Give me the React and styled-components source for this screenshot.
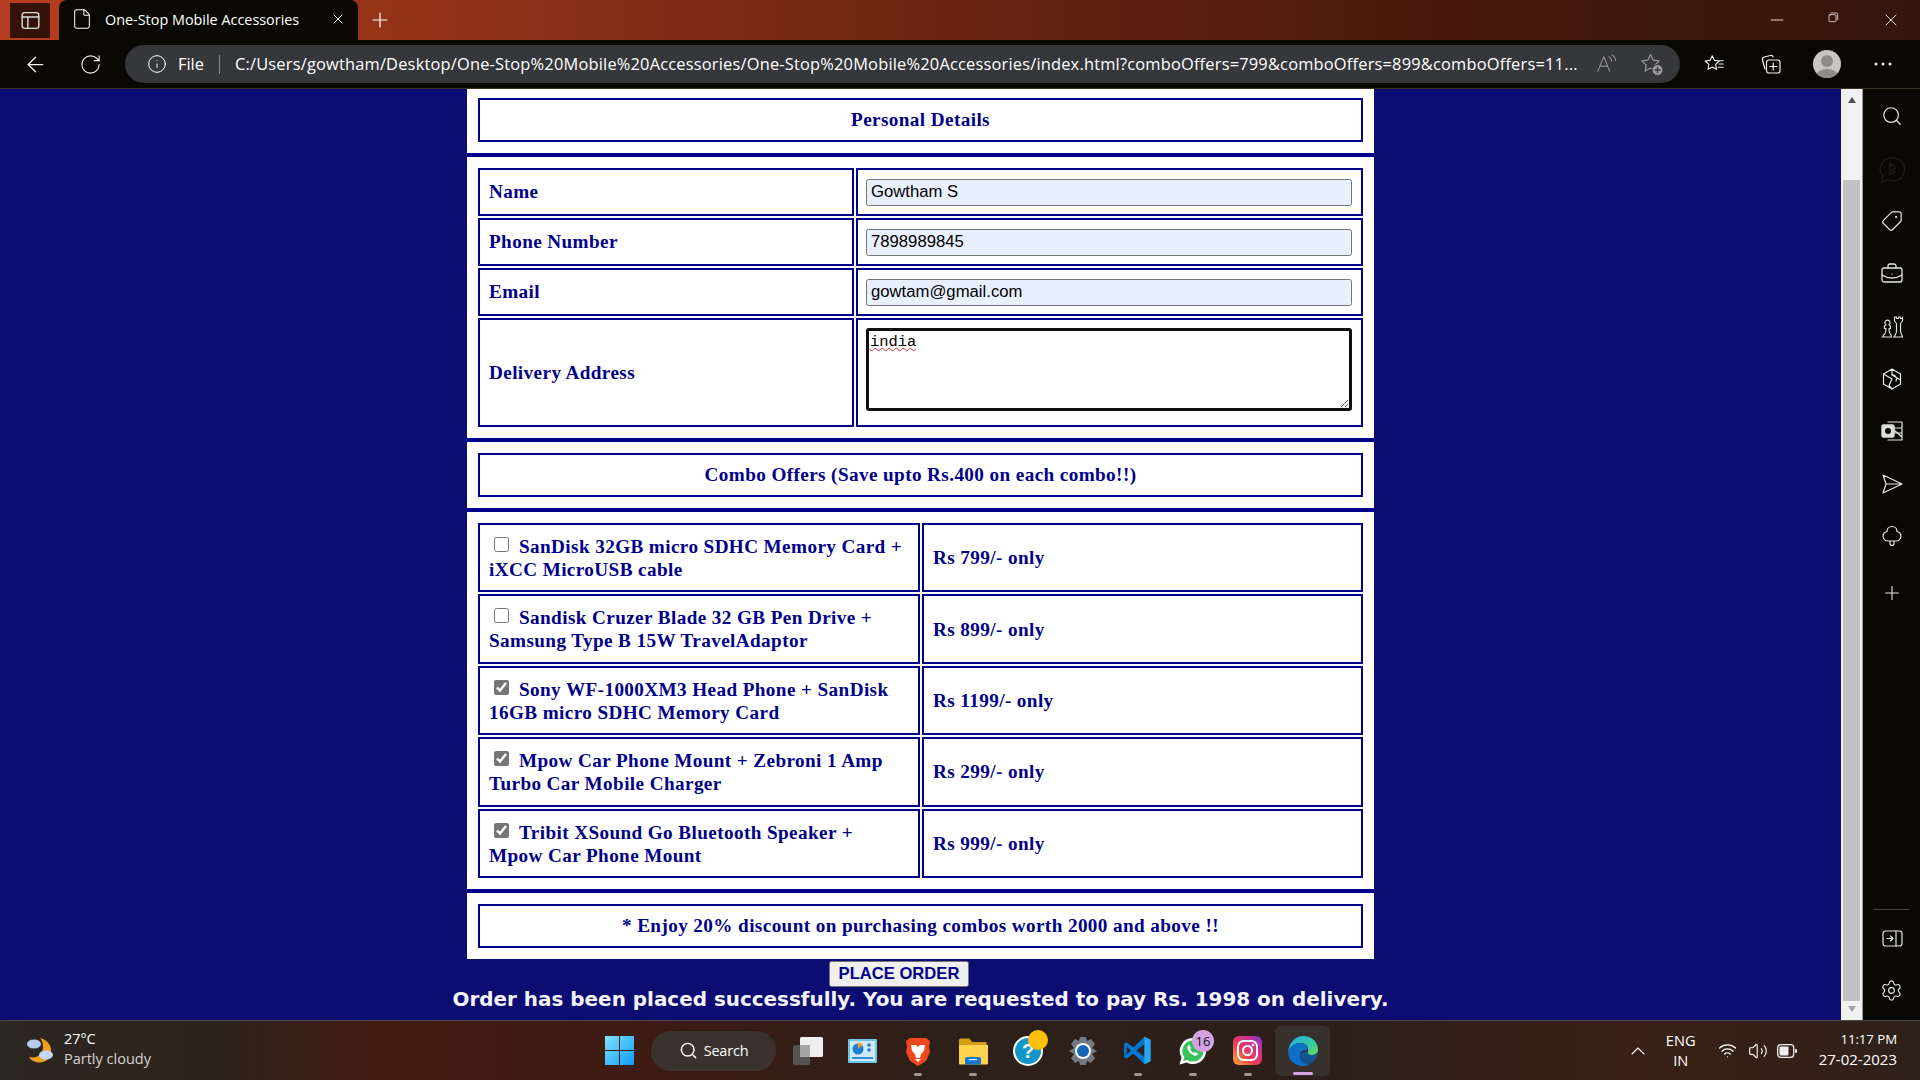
import React from 'react';
import styled, { createGlobalStyle } from 'styled-components';
import { ArrowLeft, RotateCw, Info, File, X, Plus, Minus, Search, Tag, BriefcaseBusiness, Settings, Wifi, Volume2, ChevronUp } from 'lucide-react';

const Global = createGlobalStyle`
  html, body { margin: 0; height: 100%; overflow: hidden; background: #0c0c72; }
  #root { height: 100%; }
  * { box-sizing: border-box; }
`;
const ui = `"Open Sans", "Noto Sans", sans-serif`;
const serif = `"Liberation Serif", "Times New Roman", serif`;
const arial = `"Liberation Sans", Arial, sans-serif`;
const ink = '#00008b';

const Shell = styled.div`display:flex;flex-direction:column;width:1920px;height:1080px;overflow:hidden;`;

const TitleBar = styled.div`
  height:40px;flex:none;display:flex;align-items:stretch;
  background:linear-gradient(90deg,#b83d22 0%,#9a3519 15%,#8f3119 25%,#6a2412 50%,#47190c 75%,#33160a 100%);
`;
const SideToggle = styled.div`width:40px;height:35px;margin:3px 0 0 10px;background:#33130a;display:flex;align-items:center;justify-content:center;`;
const Tab = styled.div`
  width:299px;margin-left:9px;background:#0a0803;border-radius:8px 8px 0 0;display:flex;align-items:center;
  padding:0 12px 2px 12px;color:#fff;font:14.4px ${ui};gap:12px;
  span{flex:1;white-space:nowrap;}
`;
const NewTab = styled.div`width:44px;display:flex;align-items:center;justify-content:center;color:#fff;`;
const Controls = styled.div`margin-left:auto;display:flex;color:#fff;`;
const Control = styled.div`width:${p => p.$w}px;display:flex;align-items:center;justify-content:center;`;
const LastGap = styled.div`width:1px;`;

const Toolbar = styled.div`height:49px;flex:none;background:#0a0803;border-bottom:1px solid #3a3324;display:flex;align-items:center;padding:0 9px 0 8px;color:#f2f2f2;`;
const NavButton = styled.div`width:55px;display:flex;justify-content:center;align-items:center;`;
const Address = styled.div`
  width:1555px;height:38px;margin-left:7px;margin-right:7px;background:#36373b;border-radius:19px;display:flex;align-items:center;
  padding:0 16px 0 22px;color:#fff;font:16.4px ${ui};white-space:nowrap;
`;
const InfoSlot = styled.div`display:flex;align-items:center;margin-right:11px;`;
const FileLabel = styled.span`padding-bottom:2px;`;
const Sep = styled.div`width:1px;height:19px;background:#8a8a8a;margin:0 15px 0 15px;`;
const Url = styled.div`width:1346px;overflow:hidden;letter-spacing:.2px;flex:none;padding-bottom:2px;`;
const AddrIcons = styled.div`display:flex;margin-left:auto;color:#9b9b9b;gap:22px;align-items:center;`;
const ToolButton = styled.div`width:56px;display:flex;justify-content:center;align-items:center;`;
const Avatar = styled.div`width:28px;height:28px;border-radius:50%;overflow:hidden;background:#c9c6c2;`;

const Middle = styled.div`flex:1;display:flex;min-height:0;`;
const Page = styled.main`flex:1;background:#0c0c72;display:flex;flex-direction:column;align-items:center;min-width:0;`;
const Card = styled.div`width:907px;background:#fff;font:bold 19.2px/23px ${serif};color:${ink};letter-spacing:.39px;`;
const Section = styled.section`
  padding:${p => p.$first ? '9px 11px 11px' : '11px'};
  border-top:${p => p.$first ? '0' : `4px solid ${ink}`};
`;
const Banner = styled.div`height:44px;border:2px solid ${ink};display:flex;align-items:center;justify-content:center;padding-bottom:${p => p.$flat ? '0' : '2px'};`;
const Form = styled.div`display:grid;grid-template-columns:376px 507px;gap:2px;grid-template-rows:48px 48px 48px 109px;`;
const Combos = styled.div`display:grid;grid-template-columns:442px 441px;gap:2px;grid-auto-rows:69.4px;`;
const Cell = styled.div`border:2px solid ${ink};padding:0 9px ${p => p.$lift ? '2px' : '0'};display:flex;align-items:center;min-width:0;`;
const ComboCell = styled.label`border:2px solid ${ink};padding:0 9px;display:block;align-self:stretch;`;
const ComboText = styled.span`display:block;margin-top:10px;`;
const InputCell = styled(Cell)`padding:0 9px 0 8px;`;
const AreaCell = styled(Cell)`padding:8px 9px 0 8px;align-items:flex-start;`;
const TextInput = styled.input`
  width:100%;height:27px;background:#e8f0fe;border:1px solid #767676;border-radius:2.5px;padding:0 4px;
  font:16.7px ${arial};color:#000;outline:0;
`;
const TextArea = styled.textarea`
  width:100%;height:83px;border:3px solid #101010;border-radius:3px;padding:2px 1px 0;outline:0;
  font:15.4px/1.2 "Liberation Mono",monospace;color:#000;display:block;
  text-decoration:underline wavy #e03030 1px;
`;
const Check = styled.input`width:15px;height:15px;margin:0 10px 0 5px;accent-color:#767676;vertical-align:1px;`;
const PlaceOrder = styled.button`
  width:140px;height:26px;margin:2px 43px 0 0;background:#efefef;border:1px solid #767676;border-radius:2.5px;padding:0;
  font:bold 16.6px ${arial};color:${ink};
`;
const Status = styled.div`font:bold 19.95px/1.2 "DejaVu Sans",Verdana,sans-serif;color:#f4f4ff;margin-top:1px;white-space:nowrap;`;

const Scrollbar = styled.div`width:22px;flex:none;background:#f1f1f1;display:flex;flex-direction:column;align-items:center;padding:8px 0 8px;border-right:1px solid #999;`;
const Arrow = styled.div`width:0;height:0;border-left:4.5px solid transparent;border-right:4.5px solid transparent;${p => p.$down ? 'border-top:6px solid #a3a3a3;' : 'border-bottom:6px solid #505050;'}`;
const Thumb = styled.div`width:17px;flex:1;background:#c1c1c1;margin:77px 0 5px;`;

const Side = styled.aside`width:57px;flex:none;background:#0a0803;color:#e6e6e6;display:flex;flex-direction:column;align-items:center;padding-top:16px;`;
const SideIcon = styled.div`height:52.4px;width:100%;display:flex;align-items:flex-start;justify-content:center;flex:none;${p => p.$gapTop && 'margin-top:5px;'}`;
const SideFoot = styled.div`margin-top:auto;width:100%;display:flex;flex-direction:column;align-items:center;padding-bottom:18px;`;
const SideRule = styled.div`width:35px;height:1px;background:#4a4640;margin-bottom:17px;`;

const Taskbar = styled.footer`
  height:60px;flex:none;border-top:1px solid #4a4744;display:flex;align-items:center;color:#fff;font:13px ${ui};position:relative;
  background:linear-gradient(90deg,#2b2721 0%,#2e231c 12%,#451c12 20%,#401a12 30%,#2d201a 50%,#2c1f1a 70%,#3a2016 85%,#2e211a 100%);
`;
const Weather = styled.div`width:592px;flex:none;display:flex;align-items:center;padding-left:26px;gap:8px;`;
const WeatherText = styled.div`line-height:20px;font-size:14.4px;padding-bottom:3px;color:#fff;small{display:block;font-size:14.5px;color:#d5d2cf;}`;
const Slot = styled.div`
  width:55px;height:50px;flex:none;display:flex;align-items:center;justify-content:center;position:relative;border-radius:6px;
  ${p => p.$active && 'background:#38302b;'}
  ${p => p.$dot && `&::after{content:'';position:absolute;left:50%;bottom:${p.$active ? '1px' : '0'};transform:translateX(-50%);width:${p.$active ? '20px' : '8px'};height:3px;border-radius:2px;background:${p.$active ? '#d7a3e6' : '#9a9693'};}`}
`;
const SearchPill = styled.div`width:125px;height:40px;margin:0 4px;border-radius:20px;background:#3a322d;display:flex;align-items:center;justify-content:center;gap:6px;font-size:14.5px;letter-spacing:-.2px;flex:none;`;
const Badge = styled.div`position:absolute;top:4px;right:${p => p.$right}px;width:${p => p.$size}px;height:${p => p.$size}px;border-radius:50%;display:flex;align-items:center;justify-content:center;font-size:13px;color:#111;background:${p => p.$color};`;
const Tray = styled.div`margin-left:auto;display:flex;align-items:center;padding-right:23px;`;
const TrayIcon = styled.div`display:flex;align-items:center;justify-content:center;width:${p => p.$w || 29}px;`;
const Lang = styled.div`width:56px;text-align:center;line-height:20px;font-size:14.6px;margin-right:2px;padding-bottom:2px;`;
const Clock = styled.div`text-align:right;line-height:20px;margin-left:16px;padding-bottom:3px;`;
const ClockTime = styled.div`font-size:13.3px;letter-spacing:-.1px;`;
const ClockDate = styled.div`font-size:15px;`;

const Offers = [
  ['SanDisk 32GB micro SDHC Memory Card + iXCC MicroUSB cable', 'Rs 799/- only', false],
  ['Sandisk Cruzer Blade 32 GB Pen Drive + Samsung Type B 15W TravelAdaptor', 'Rs 899/- only', false],
  ['Sony WF-1000XM3 Head Phone + SanDisk 16GB micro SDHC Memory Card', 'Rs 1199/- only', true],
  ['Mpow Car Phone Mount + Zebroni 1 Amp Turbo Car Mobile Charger', 'Rs 299/- only', true],
  ['Tribit XSound Go Bluetooth Speaker + Mpow Car Phone Mount', 'Rs 999/- only', true],
];

const Svg = ({ s = 24, v = '0 0 24 24', children }) => <svg width={s} height={s} viewBox={v} fill="none" stroke="currentColor" strokeWidth="1.4" strokeLinecap="round" strokeLinejoin="round">{children}</svg>;

const App = () => (
  <Shell>
    <Global />
    <TitleBar>
      <SideToggle><Svg s={21}><rect x="2.500" y="3" width="19" height="18" rx="3" stroke="#ddd" strokeWidth="1.600" /><path d="M2.500 8h19M9 8v13" stroke="#ddd" strokeWidth="1.600" /></Svg></SideToggle>
      <Tab><File size={22} strokeWidth={1.1} /><span>One-Stop Mobile Accessories</span><X size={16} strokeWidth={1.5} /></Tab>
      <NewTab><Plus size={24} strokeWidth={1.2} /></NewTab>
      <Controls>
        <Control $w={62}><Minus size={20} strokeWidth={1} /></Control>
        <Control $w={55}><Svg s={16}><rect x="1.500" y="4" width="10.500" height="10.500" rx="1.800" strokeWidth="1.100" /><path d="M4.500 1.500h8a2 2 0 0 1 2 2v8" strokeWidth="1.100" /></Svg></Control>
        <Control $w={56}><X size={20} strokeWidth={1} /></Control>
        <LastGap />
      </Controls>
    </TitleBar>
    <Toolbar>
      <NavButton><ArrowLeft size={25} strokeWidth={1.2} /></NavButton>
      <NavButton><RotateCw size={23} strokeWidth={1.2} /></NavButton>
      <Address>
        <InfoSlot><Info size={20} strokeWidth={1.2} /></InfoSlot>
        <FileLabel>File</FileLabel><Sep />
        <Url>C:/Users/gowtham/Desktop/One-Stop%20Mobile%20Accessories/One-Stop%20Mobile%20Accessories/index.html?comboOffers=799&amp;comboOffers=899&amp;comboOffers=11...</Url>
        <AddrIcons>
          <Svg s={22}><path d="M2 20 8.500 4 15 20M4.500 14.500h8M14 4c2 1 3 3 3.200 5M17.500 2c2.400 1.400 3.700 3.800 4 6.500" strokeWidth="1.100" /></Svg>
          <Svg s={24}><path d="m10.500 2.500 2.600 5.600 6.100.8-4.500 4.200 1.200 6-5.400-3-5.400 3 1.200-6-4.500-4.200 6.100-.8z" strokeWidth="1.200" /><circle cx="17.500" cy="18" r="5.500" fill="#9b9b9b" stroke="#36373b" strokeWidth="1" /><path d="M17.500 15.500v5M15 18h5" stroke="#36373b" strokeWidth="1.300" /></Svg>
        </AddrIcons>
      </Address>
      <ToolButton><Svg s={22}><path d="m9 3 2.300 5 5.400.7-4 3.700 1 5.400L9 15.200l-4.700 2.600 1-5.400-4-3.700 5.400-.7zM16 8.500h5M16.500 12h4.500M15.500 15.500h5.500" strokeWidth="1.200" /></Svg></ToolButton>
      <ToolButton><Svg s={24}><path d="M6 17 3.500 8A2.500 2.500 0 0 1 5.300 5l6-1.500c1.300-.3 2.300.2 2.800 1.500" strokeWidth="1.200" /><rect x="7.500" y="8" width="13.500" height="13" rx="2.500" strokeWidth="1.200" /><path d="M14.200 11v7M10.800 14.500h7" strokeWidth="1.200" /></Svg></ToolButton>
      <ToolButton><Avatar><svg width="28" height="28" viewBox="0 0 28 28"><circle cx="14" cy="11" r="6" fill="#8f8c88" /><ellipse cx="14" cy="26" rx="11" ry="7" fill="#8f8c88" /></svg></Avatar></ToolButton>
      <ToolButton><svg width="20" height="6" viewBox="0 0 20 6"><circle cx="3" cy="3" r="1.500" fill="#eee" /><circle cx="10" cy="3" r="1.500" fill="#eee" /><circle cx="17" cy="3" r="1.500" fill="#eee" /></svg></ToolButton>
    </Toolbar>
    <Middle>
      <Page>
        <Card>
          <Section $first><Banner>Personal Details</Banner></Section>
          <Section>
            <Form>
              <Cell $lift>Name</Cell><InputCell><TextInput readOnly value="Gowtham S" /></InputCell>
              <Cell $lift>Phone Number</Cell><InputCell><TextInput readOnly value="7898989845" /></InputCell>
              <Cell $lift>Email</Cell><InputCell><TextInput readOnly value="gowtam@gmail.com" /></InputCell>
              <Cell>Delivery Address</Cell><AreaCell><TextArea readOnly value="india" /></AreaCell>
            </Form>
          </Section>
          <Section><Banner>Combo Offers (Save upto Rs.400 on each combo!!)</Banner></Section>
          <Section>
            <Combos>
              {Offers.map(([name, price, on]) => (
                <React.Fragment key={name}>
                  <ComboCell><ComboText><Check type="checkbox" readOnly checked={on} />{name}</ComboText></ComboCell>
                  <Cell>{price}</Cell>
                </React.Fragment>
              ))}
            </Combos>
          </Section>
          <Section><Banner $flat>* Enjoy 20% discount on purchasing combos worth 2000 and above !!</Banner></Section>
        </Card>
        <PlaceOrder>PLACE ORDER</PlaceOrder>
        <Status>Order has been placed successfully. You are requested to pay Rs. 1998 on delivery.</Status>
      </Page>
      <Scrollbar><Arrow /><Thumb /><Arrow $down /></Scrollbar>
      <Side>
        <SideIcon><Search size={22} strokeWidth={1.3} /></SideIcon>
        <SideIcon><Svg s={26}><path d="M13 1a10.500 10.500 0 1 1-5 19.700L3 24l.5-6A10.500 10.500 0 0 1 13 1z" stroke="#1c1b18" /><path d="M10 6v10l5-2.500-3-1.500 4-2z" stroke="#1c1b18" /></Svg></SideIcon>
        <SideIcon><Tag size={22} strokeWidth={1.3} style={{ transform: 'rotate(90deg)' }} /></SideIcon>
        <SideIcon><BriefcaseBusiness size={24} strokeWidth={1.3} /></SideIcon>
        <SideIcon><Svg s={24}><path d="M2 22h9M3 22c0-2 1-2.500 2-3.500s1-3 1-5H4.500c-.5-2 .3-3.200 1.500-3.700a2.600 2.600 0 1 1 3 0c1.200.5 1.700 1.800 1.500 3.700H9c0 2 .2 4 1 5s1.500 1.500 1.500 3.500" strokeWidth="1.150" /><path d="M13.500 22h9M14.500 22c0-2 1.500-2.500 1.800-4.500.3-2 .2-6 .2-9L14.500 6V2h2v1.500h2V2h2v1.500h2V2v4l-2 2.500c0 3 0 7 .3 9 .3 2 1.700 2.500 1.700 4.500" strokeWidth="1.150" /></Svg></SideIcon>
        <SideIcon><Svg s={24}><path d="m12 2 8.500 5v10L12 22l-8.500-5V7zM3.500 7 12 12l-3 6.500M12 2v6l8.500 5M9 18.500l3 3.500M12 8a4 4 0 0 1 4 6" strokeWidth="1.200" /></Svg></SideIcon>
        <SideIcon><Svg s={24}><rect x="2" y="6" width="12" height="12" rx="1.500" fill="#ddd" stroke="#ddd" /><circle cx="8" cy="12" r="3" fill="#0a0803" stroke="none" /><path d="M8 3h14v18H8M14 9h8M14 14h8M14 11l8 7" strokeWidth="1.200" /></Svg></SideIcon>
        <SideIcon><Svg s={24}><path d="M3 3 22 12 3 21l3-9zM6 12h16" strokeWidth="1.200" /></Svg></SideIcon>
        <SideIcon><Svg s={24}><path d="M12 2.500c3 0 5 2.200 5 5 2.500.6 4 2.400 4 4.700a4.800 4.800 0 0 1-5 4.800H8a4.800 4.800 0 0 1-5-4.800c0-2.300 1.500-4.100 4-4.700 0-2.800 2-5 5-5zM10 17v2.500a2 2 0 0 0 4 0V17" strokeWidth="1.200" /></Svg></SideIcon>
        <SideIcon $gapTop><Plus size={22} strokeWidth={1.2} /></SideIcon>
        <SideFoot>
          <SideRule />
          <SideIcon><Svg s={24}><rect x="3" y="4" width="19" height="15" rx="2.500" strokeWidth="1.200" /><path d="M16 4v15M7 11.500h5.500M10.500 9l2.500 2.500-2.500 2.500" strokeWidth="1.200" /></Svg></SideIcon>
          <Settings size={23} strokeWidth={1.2} />
        </SideFoot>
      </Side>
    </Middle>
    <Taskbar>
      <Weather>
        <svg width="30" height="30" viewBox="0 0 30 30"><path d="M14 2c8 2 12 8 11 15s-8 11-15 9c-4-1-6-3-7-5 8 2 14-3 14-10 0-4-1-7-3-9z" fill="#f0a020" /><ellipse cx="8" cy="8" rx="7" ry="4.500" fill="#b6cdf2" /><ellipse cx="20" cy="19" rx="7" ry="4.500" fill="#c3d7f6" /></svg>
        <WeatherText>27°C<small>Partly cloudy</small></WeatherText>
      </Weather>
      <Slot><svg width="29" height="29" viewBox="0 0 29 29"><defs><linearGradient id="w" x1="0" y1="0" x2="1" y2="1"><stop offset="0" stopColor="#7fe3ff" /><stop offset="1" stopColor="#0f9bf5" /></linearGradient></defs><path d="M0 0h14v14H0zM15 0h14v14H15zM0 15h14v14H0zM15 15h14v14H15z" fill="url(#w)" /></svg></Slot>
      <SearchPill><Search size={19} strokeWidth={1.8} />Search</SearchPill>
      <Slot><svg width="30" height="28" viewBox="0 0 30 28"><rect x="0" y="8" width="17" height="20" rx="2" fill="#55534f" /><rect x="7" y="0" width="23" height="20" rx="1.500" fill="#efefef" /><rect x="7" y="8" width="10" height="12" fill="#a8a6a4" /></svg></Slot>
      <Slot><svg width="29" height="24" viewBox="0 0 29 24"><rect width="29" height="24" rx="1" fill="#6ec6ec" /><rect x="2" y="2" width="25" height="20" fill="#cfe9f7" /><circle cx="10" cy="10" r="5.500" fill="#1e7fd0" /><path d="M10 10V3l5 2z" fill="#f0a030" /><circle cx="21" cy="6" r="1.800" fill="#1e7fd0" /><circle cx="21" cy="11" r="1.800" fill="#1e7fd0" /><rect x="4" y="18" width="21" height="2" fill="#2a8ed8" /></svg></Slot>
      <Slot $dot><svg width="26" height="30" viewBox="0 0 26 30"><path d="M5 2h16l4 3-1 6 1 5-4 9-8 5-8-5-4-9 1-5-1-6z" fill="#f0481e" /><path d="M6 9h5l2 2 2-2h5l-1 6-3 3-1 4h-4l-1-4-3-3zM10 23h6l-3 3z" fill="#fff" /></svg></Slot>
      <Slot $dot><svg width="30" height="28" viewBox="0 0 30 28"><path d="M1 3a1.500 1.500 0 0 1 1.500-1.500h9L14 5h14.500v4H1z" fill="#d69c12" /><path d="M1 8h29v18.500a1 1 0 0 1-1 1H2a1 1 0 0 1-1-1z" fill="#ffd34e" /><path d="M7 22a2 2 0 0 1 2-2h12a2 2 0 0 1 2 2v5.500H7z" fill="#1477c9" /><rect x="11" y="22" width="8" height="1.200" fill="#cfe8fa" /></svg></Slot>
      <Slot><svg width="30" height="30" viewBox="0 0 30 30"><circle cx="15" cy="15" r="15" fill="#fff" /><circle cx="15" cy="15" r="13" fill="#1296c8" /><text x="15" y="22" textAnchor="middle" fontFamily="Liberation Sans" fontWeight="700" fontSize="20" fill="#fff">?</text></svg><Badge $color="#fdbf0a" $right={7} $size={20} /></Slot>
      <Slot><svg width="30" height="30" viewBox="0 0 30 30"><path d="M12 1h6l1 4 4-2 4 5-3 4 5 3-5 3 3 4-4 5-4-2-1 4h-6l-1-4-4 2-4-5 3-4-5-3 5-3-3-4 4-5 4 2z" fill="#717a85" /><circle cx="15" cy="15" r="8" fill="#fff" /><circle cx="15" cy="15" r="6" fill="#1668b4" /></svg></Slot>
      <Slot $dot><svg width="29" height="29" viewBox="0 0 100 100"><path d="M74 3 95 13v74L74 97 36 60 13 78 4 73V27l9-5 23 18z" fill="#0078d4" /><path d="M74 28 46 50l28 22z" fill="#2c2320" /><path d="M13 35v30l14-15z" fill="#2c2320" /><path d="M74 3 95 13v74L74 97z" fill="#2aa6f0" /></svg></Slot>
      <Slot $dot><svg width="30" height="30" viewBox="0 0 30 30"><path d="M15 2a13 13 0 0 1 0 26c-2.300 0-4.400-.6-6.200-1.600L1.500 28.500l2-7A13 13 0 0 1 15 2z" fill="#fff" /><path d="M15 4.500a10.500 10.500 0 0 1 0 21c-2.100 0-4-.6-5.600-1.600l-4.200 1.200 1.200-4A10.500 10.500 0 0 1 15 4.500z" fill="#37c25a" /><path d="M11 9c-1.500.5-2 2-1.500 3.700 1 3 3.500 5.500 6.500 6.700 2 .7 3.500 0 4-1.700l-2.800-1.700-1.300 1c-1.800-.8-3-2.100-3.800-3.800l1-1.300z" fill="#fff" /></svg><Badge $color="#d3a3e0" $right={6} $size={22}>16</Badge></Slot>
      <Slot $dot><svg width="29" height="29" viewBox="0 0 29 29"><defs><linearGradient id="ig" x1="0" y1="1" x2="1" y2="0"><stop offset="0" stopColor="#fdb02e" /><stop offset=".4" stopColor="#ef3d50" /><stop offset=".75" stopColor="#cb2e9c" /><stop offset="1" stopColor="#6a3fd0" /></linearGradient></defs><rect width="29" height="29" rx="6" fill="url(#ig)" /><rect x="5" y="5" width="19" height="19" rx="5.500" fill="none" stroke="#fff" strokeWidth="2" /><circle cx="14.500" cy="14.500" r="4.500" fill="none" stroke="#fff" strokeWidth="2" /><circle cx="20" cy="9" r="1.300" fill="#fff" /></svg></Slot>
      <Slot $dot $active><svg width="30" height="30" viewBox="0 0 30 30"><defs><linearGradient id="eg" x1="0" y1="0" x2="1" y2="1"><stop offset="0" stopColor="#27a9e6" /><stop offset=".6" stopColor="#35c9a0" /><stop offset="1" stopColor="#6fdc58" /></linearGradient></defs><path d="M15 0c9 0 15 6 15 14 0 3-2 5-6 5-5 0-5-2-4-4 1-5-3-8-7-8-7 0-12 5-13 9C1 7 7 0 15 0z" fill="url(#eg)" /><path d="M0 16c1-5 6-9 13-9 5 0 8 4 6 7-3 0-7 1-7 5s4 8 8 8l1 2c-1 .5-3 1-6 1C7 30 0 24 0 16z" fill="#0e6fc9" /><path d="M12 20c0-3 3-5 8-5-1 3 0 4 4 4 2 0 4-1 6-3-.5 6-4 10-9 12-6 1-9-4-9-8z" fill="#12528f" /></svg></Slot>
      <Tray>
        <TrayIcon $w={30}><ChevronUp size={24} strokeWidth={1.1} /></TrayIcon>
        <Lang>ENG<br />IN</Lang>
        <TrayIcon $w={34}><Wifi size={19} strokeWidth={1.6} /></TrayIcon>
        <TrayIcon $w={26}><Volume2 size={20} strokeWidth={1.3} /></TrayIcon>
        <TrayIcon $w={32}><svg width="20" height="14" viewBox="0 0 20 14"><rect x=".7" y=".7" width="16" height="12.600" rx="3" fill="none" stroke="#eee" strokeWidth="1.300" /><rect x="2.500" y="2.500" width="9" height="9" rx="1" fill="#eee" /><rect x="18" y="5" width="2" height="4" rx="1" fill="#eee" /></svg></TrayIcon>
        <Clock><ClockTime>11:17 PM</ClockTime><ClockDate>27-02-2023</ClockDate></Clock>
      </Tray>
    </Taskbar>
  </Shell>
);
export default App;
